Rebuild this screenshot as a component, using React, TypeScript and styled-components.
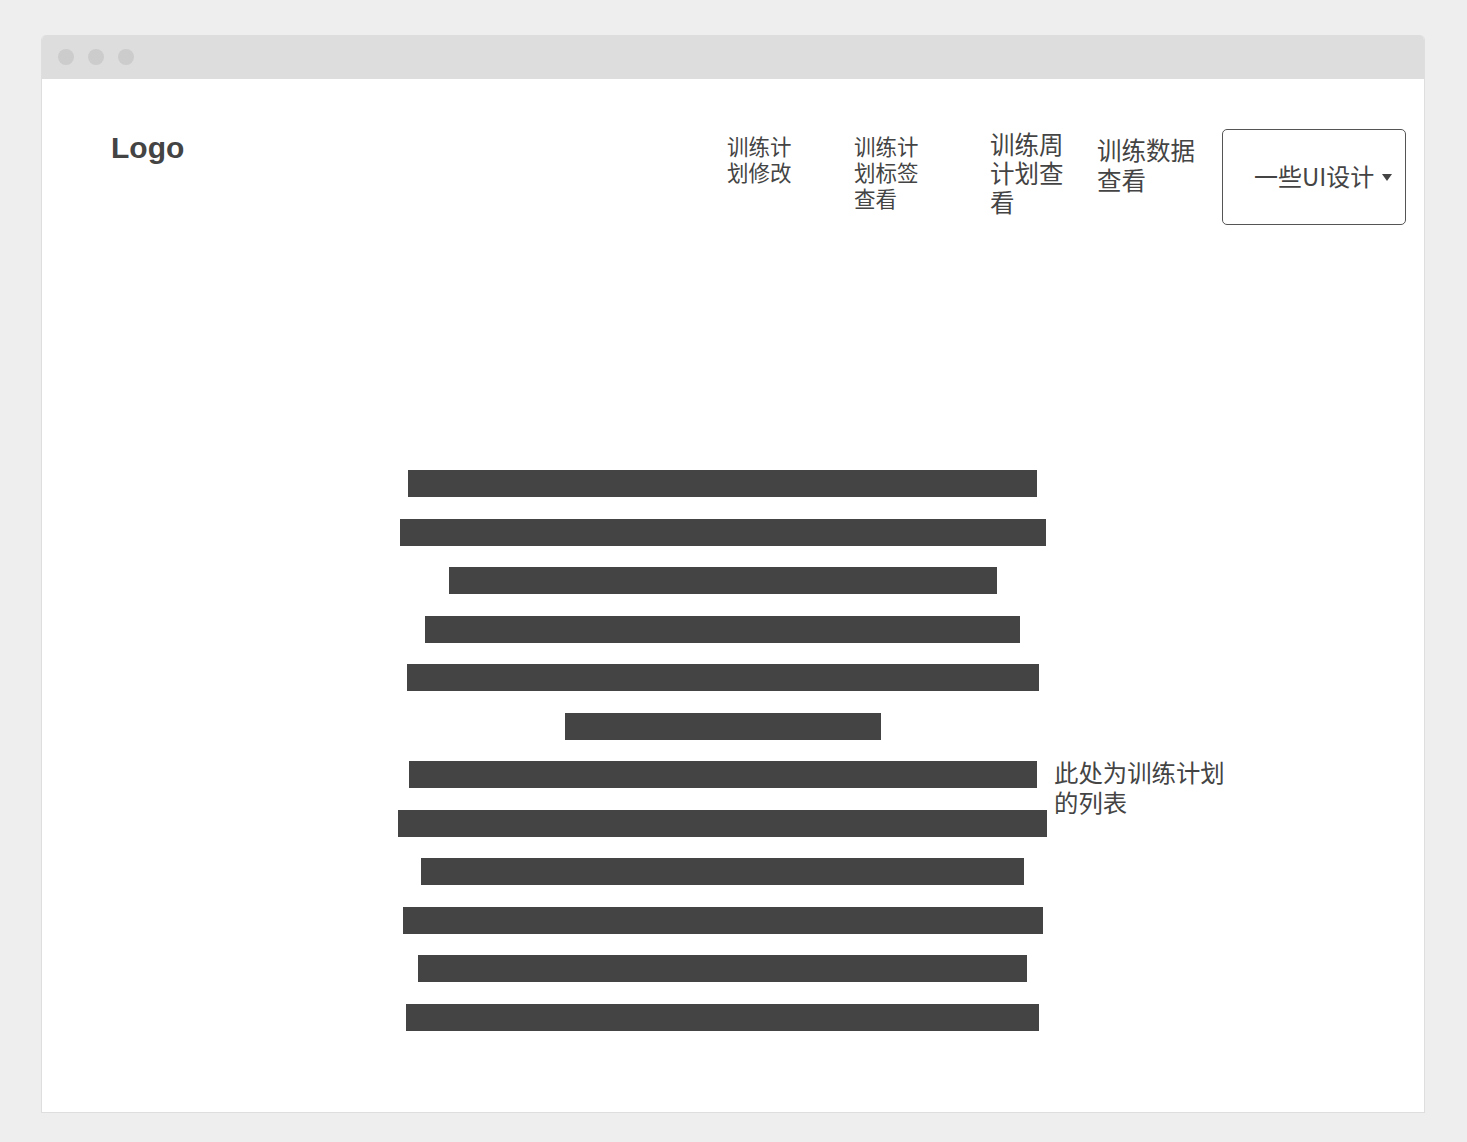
import React from "react";
import styled, { createGlobalStyle } from "styled-components";

const GlobalStyle = createGlobalStyle`
  html, body {
    margin: 0;
    padding: 0;
    background: #eeeeee;
  }
  body {
    font-family: "Liberation Sans", "Noto Sans CJK SC", sans-serif;
    color: #444444;
  }
`;

const Page = styled.div`
  padding: 35px 0 0 41px;
  width: 1467px;
  height: 1142px;
  box-sizing: border-box;
`;

const Window = styled.div`
  width: 1384px;
  height: 1078px;
  box-sizing: border-box;
  background: #ffffff;
  border: 1px solid #dedede;
  border-top: none;
  border-radius: 5px 5px 0 0;
  display: flex;
  flex-direction: column;
  overflow: hidden;
`;

const TitleBar = styled.div`
  height: 44px;
  background: #dddddd;
  display: flex;
  align-items: center;
  gap: 14px;
  padding-left: 16px;
  flex-shrink: 0;
`;

const Dot = styled.span`
  width: 16px;
  height: 16px;
  border-radius: 50%;
  background: #cccccc;
`;

const Header = styled.header`
  display: flex;
  align-items: flex-start;
  padding: 50px 0 0 69px;
`;

const Logo = styled.div`
  font-family: "Liberation Sans", sans-serif;
  font-weight: bold;
  font-size: 30px;
  line-height: 33px;
  margin-top: 2px;
  margin-right: auto;
  color: #444444;
`;

const NavItem = styled.div<{ $size: number; $lh: number; $w: number; $mr: number; $mt: number }>`
  font-family: "Noto Sans CJK SC", sans-serif;
  font-size: ${(p) => p.$size}px;
  line-height: ${(p) => p.$lh}px;
  width: ${(p) => p.$w}px;
  margin-right: ${(p) => p.$mr}px;
  margin-top: ${(p) => p.$mt}px;
  color: #444444;
  word-break: break-all;
`;

const MenuButton = styled.div`
  box-sizing: border-box;
  width: 184px;
  height: 96px;
  border: 1px solid #555555;
  border-radius: 5px;
  display: flex;
  align-items: center;
  padding-left: 31px;
  gap: 8px;
  margin-right: 18px;
  font-size: 24px;
  color: #444444;
`;

const ButtonLabel = styled.span`
  font-family: "Noto Sans CJK SC", sans-serif;
  line-height: 30px;
  margin-top: -3px;
`;

const Main = styled.main`
  display: flex;
  align-items: flex-start;
  padding: 245px 0 0 356px;
`;

const BarList = styled.div`
  width: 649px;
  display: flex;
  flex-direction: column;
  align-items: center;
  gap: 21.55px;
`;

const Bar = styled.div<{ $w: number }>`
  width: ${(p) => p.$w}px;
  height: 27px;
  background: #444444;
`;

const Note = styled.div`
  font-family: "Noto Sans CJK SC", sans-serif;
  font-size: 24.4px;
  line-height: 30px;
  width: 185px;
  margin: 287px 0 0 7px;
  color: #444444;
`;

const barWidths = [629, 646, 548, 595, 632, 316, 628, 649, 603, 640, 609, 633];

const Caret = () => (
  <svg width="10" height="7" viewBox="0 0 10 7" aria-hidden="true">
    <path d="M0 0 L10 0 L5 7 Z" fill="#444444" />
  </svg>
);

export default function App() {
  return (
    <>
      <GlobalStyle />
      <Page>
        <Window>
          <TitleBar>
            <Dot />
            <Dot />
            <Dot />
          </TitleBar>
          <Header>
            <Logo>Logo</Logo>
            <NavItem $size={21.5} $lh={26} $w={72} $mr={55} $mt={4}>
              训练计划修改
            </NavItem>
            <NavItem $size={21.5} $lh={26} $w={72} $mr={64} $mt={4}>
              训练计划标签查看
            </NavItem>
            <NavItem $size={24.5} $lh={29} $w={82} $mr={25} $mt={0}>
              训练周计划查看
            </NavItem>
            <NavItem $size={24.5} $lh={30} $w={104} $mr={21} $mt={6}>
              训练数据查看
            </NavItem>
            <MenuButton>
              <ButtonLabel>一些UI设计</ButtonLabel>
              <Caret />
            </MenuButton>
          </Header>
          <Main>
            <BarList>
              {barWidths.map((w, i) => (
                <Bar key={i} $w={w} />
              ))}
            </BarList>
            <Note>此处为训练计划的列表</Note>
          </Main>
        </Window>
      </Page>
    </>
  );
}
